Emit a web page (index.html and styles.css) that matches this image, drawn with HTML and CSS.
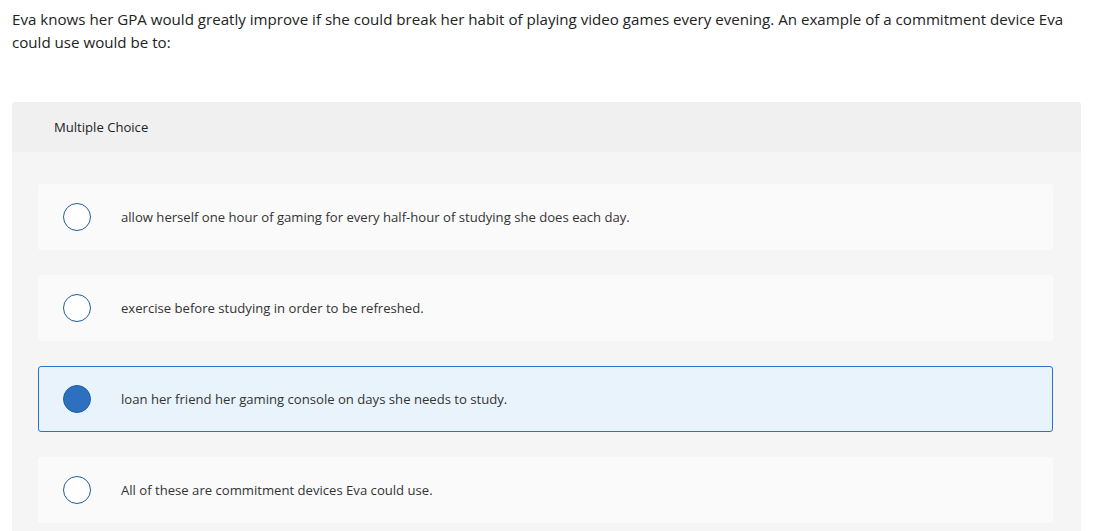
FILE: index.html
```html
<!DOCTYPE html>
<html>
<head>
<meta charset="utf-8">
<link rel="stylesheet" href="styles.css">
</head>
<body>
<div class="page">
  <p class="question">Eva knows her GPA would greatly improve if she could break her habit of playing video games every evening. An example of a commitment device Eva could use would be to:</p>
  <div class="panel">
    <div class="panel-header">Multiple Choice</div>
    <div class="panel-body">
      <div class="option"><span class="radio"></span><span class="label">allow herself one hour of gaming for every half-hour of studying she does each day.</span></div>
      <div class="option"><span class="radio"></span><span class="label">exercise before studying in order to be refreshed.</span></div>
      <div class="option selected"><span class="radio"></span><span class="label">loan her friend her gaming console on days she needs to study.</span></div>
      <div class="option"><span class="radio"></span><span class="label">All of these are commitment devices Eva could use.</span></div>
    </div>
  </div>
</div>
</body>
</html>
```

FILE: styles.css
```css
html, body {
  margin: 0;
  padding: 0;
  background: #ffffff;
}
body {
  font-family: "Open Sans", "Liberation Sans", sans-serif;
  color: #222;
}
.page {
  padding: 8px 15px 0 12px;
}
.question {
  margin: 0;
  font-size: 15.12px;
  line-height: 23px;
  color: #222;
}
.panel {
  margin-top: 48px;
  background: #f5f5f5;
  border-radius: 3px 3px 0 0;
}
.panel-header {
  height: 50px;
  display: flex;
  align-items: center;
  padding-left: 42px;
  background: #f0f0f0;
  border-radius: 3px 3px 0 0;
  font-size: 13.1px;
  color: #222;
}
.panel-body {
  display: flex;
  flex-direction: column;
  gap: 25px;
  padding: 32px 28px 20px 26px;
}
.option {
  box-sizing: border-box;
  height: 66px;
  display: flex;
  align-items: center;
  padding-left: 24px;
  background: #fafafa;
  border: 1px solid transparent;
  border-radius: 3px;
}
.option.selected {
  background: #e9f3fc;
  border-color: #2f72c4;
}
.radio {
  box-sizing: border-box;
  width: 28px;
  height: 28px;
  flex: none;
  border-radius: 50%;
  border: 1.5px solid #1e5c9c;
  background: #fff;
}
.selected .radio {
  background: #2d70c0;
  border-color: #1f5fa6;
}
.label {
  margin-left: 30px;
  font-size: 13.12px;
  color: #333;
}
```
